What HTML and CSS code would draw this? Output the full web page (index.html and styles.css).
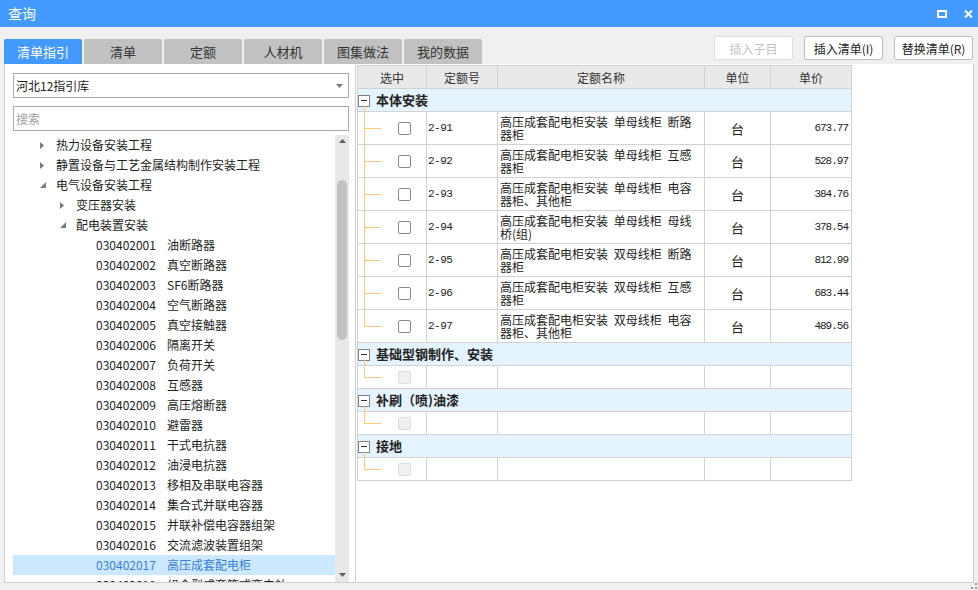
FILE: index.html
```html
<!DOCTYPE html>
<html lang="zh-CN">
<head>
<meta charset="utf-8">
<title>查询</title>
<link rel="stylesheet" href="styles.css">
</head>
<body>
<div class="titlebar">
  <span class="title">查询</span>
  <div class="win-ctrls">
    <svg class="ico-max" width="10" height="8" viewBox="0 0 10 8"><rect x="1" y="1" width="8" height="6" fill="none" stroke="#fff" stroke-width="2"/></svg>
    <svg class="ico-close" width="9" height="8" viewBox="0 0 9 8"><path d="M1 0.5L8 7.5M8 0.5L1 7.5" stroke="#fff" stroke-width="2" fill="none"/></svg>
  </div>
</div>

<div class="toolbar">
  <div class="tabs">
    <div class="tab active">清单指引</div>
    <div class="tab">清单</div>
    <div class="tab">定额</div>
    <div class="tab">人材机</div>
    <div class="tab">图集做法</div>
    <div class="tab">我的数据</div>
  </div>
  <div class="actions">
    <button class="btn disabled">插入子目</button>
    <button class="btn">插入清单(I)</button>
    <button class="btn">替换清单(R)</button>
  </div>
</div>

<div class="content">
  <div class="left">
    <div class="select">
      <span>河北12指引库</span>
      <svg width="7" height="4" viewBox="0 0 7 4"><path d="M0 0H7L3.5 4Z" fill="#7a7a7a"/></svg>
    </div>
    <div class="search">搜索</div>
    <div class="tree-wrap">
      <div class="tree">
        <div class="node l1"><span class="arr"><svg width="4" height="7" viewBox="0 0 4 7"><path d="M0 0L4 3.5L0 7Z" fill="#7a7a7a"/></svg></span>热力设备安装工程</div>
        <div class="node l1"><span class="arr"><svg width="4" height="7" viewBox="0 0 4 7"><path d="M0 0L4 3.5L0 7Z" fill="#7a7a7a"/></svg></span>静置设备与工艺金属结构制作安装工程</div>
        <div class="node l1"><span class="arr"><svg width="6" height="6" viewBox="0 0 6 6"><path d="M6 0V6H0Z" fill="#7a7a7a"/></svg></span>电气设备安装工程</div>
        <div class="node l2"><span class="arr"><svg width="4" height="7" viewBox="0 0 4 7"><path d="M0 0L4 3.5L0 7Z" fill="#7a7a7a"/></svg></span>变压器安装</div>
        <div class="node l2"><span class="arr"><svg width="6" height="6" viewBox="0 0 6 6"><path d="M6 0V6H0Z" fill="#7a7a7a"/></svg></span>配电装置安装</div>
        <div class="node l3"><span class="code">030402001</span>油断路器</div>
        <div class="node l3"><span class="code">030402002</span>真空断路器</div>
        <div class="node l3"><span class="code">030402003</span>SF6断路器</div>
        <div class="node l3"><span class="code">030402004</span>空气断路器</div>
        <div class="node l3"><span class="code">030402005</span>真空接触器</div>
        <div class="node l3"><span class="code">030402006</span>隔离开关</div>
        <div class="node l3"><span class="code">030402007</span>负荷开关</div>
        <div class="node l3"><span class="code">030402008</span>互感器</div>
        <div class="node l3"><span class="code">030402009</span>高压熔断器</div>
        <div class="node l3"><span class="code">030402010</span>避雷器</div>
        <div class="node l3"><span class="code">030402011</span>干式电抗器</div>
        <div class="node l3"><span class="code">030402012</span>油浸电抗器</div>
        <div class="node l3"><span class="code">030402013</span>移相及串联电容器</div>
        <div class="node l3"><span class="code">030402014</span>集合式并联电容器</div>
        <div class="node l3"><span class="code">030402015</span>并联补偿电容器组架</div>
        <div class="node l3"><span class="code">030402016</span>交流滤波装置组架</div>
        <div class="node l3 selected"><span class="code">030402017</span>高压成套配电柜</div>
        <div class="node l3"><span class="code">030402018</span>组合型成套箱式变电站</div>
      </div>
      <div class="scrollbar">
        <div class="sb-btn"><svg width="7" height="4" viewBox="0 0 7 4"><path d="M0 4H7L3.5 0Z" fill="#606060"/></svg></div>
        <div class="sb-thumb"></div>
        <div class="sb-fill"></div>
        <div class="sb-btn bottom"><svg width="7" height="4" viewBox="0 0 7 4"><path d="M0 0H7L3.5 4Z" fill="#606060"/></svg></div>
      </div>
    </div>
  </div>

  <div class="right">
    <table class="grid">
      <colgroup>
        <col class="c1"><col class="c2"><col class="c3"><col class="c4"><col class="c5">
      </colgroup>
      <thead>
        <tr class="hdr"><th>选中</th><th>定额号</th><th>定额名称</th><th>单位</th><th>单价</th></tr>
      </thead>
      <tbody>
        <tr class="grp"><td colspan="5"><div class="grp-in"><span class="minus"></span>本体安装</div><i class="gline"></i></td></tr>
        <tr class="row"><td class="sel"><i class="vline"></i><i class="hline"></i><span class="cb"></span></td><td class="code">2-91</td><td class="name">高压成套配电柜安装 单母线柜 断路器柜</td><td class="unit">台</td><td class="price">673.77</td></tr>
        <tr class="row"><td class="sel"><i class="vline"></i><i class="hline"></i><span class="cb"></span></td><td class="code">2-92</td><td class="name">高压成套配电柜安装 单母线柜 互感器柜</td><td class="unit">台</td><td class="price">528.97</td></tr>
        <tr class="row"><td class="sel"><i class="vline"></i><i class="hline"></i><span class="cb"></span></td><td class="code">2-93</td><td class="name">高压成套配电柜安装 单母线柜 电容器柜、其他柜</td><td class="unit">台</td><td class="price">384.76</td></tr>
        <tr class="row"><td class="sel"><i class="vline"></i><i class="hline"></i><span class="cb"></span></td><td class="code">2-94</td><td class="name">高压成套配电柜安装 单母线柜 母线桥(组)</td><td class="unit">台</td><td class="price">378.54</td></tr>
        <tr class="row"><td class="sel"><i class="vline"></i><i class="hline"></i><span class="cb"></span></td><td class="code">2-95</td><td class="name">高压成套配电柜安装 双母线柜 断路器柜</td><td class="unit">台</td><td class="price">812.99</td></tr>
        <tr class="row"><td class="sel"><i class="vline"></i><i class="hline"></i><span class="cb"></span></td><td class="code">2-96</td><td class="name">高压成套配电柜安装 双母线柜 互感器柜</td><td class="unit">台</td><td class="price">683.44</td></tr>
        <tr class="row"><td class="sel"><i class="vline last"></i><i class="hline"></i><span class="cb"></span></td><td class="code">2-97</td><td class="name">高压成套配电柜安装 双母线柜 电容器柜、其他柜</td><td class="unit">台</td><td class="price">489.56</td></tr>
        <tr class="grp"><td colspan="5"><div class="grp-in"><span class="minus"></span>基础型钢制作、安装</div><i class="gline"></i></td></tr>
        <tr class="row empty"><td class="sel"><i class="vline last"></i><i class="hline"></i><span class="cb off"></span></td><td></td><td></td><td></td><td></td></tr>
        <tr class="grp"><td colspan="5"><div class="grp-in"><span class="minus"></span>补刷（喷)油漆</div><i class="gline"></i></td></tr>
        <tr class="row empty"><td class="sel"><i class="vline last"></i><i class="hline"></i><span class="cb off"></span></td><td></td><td></td><td></td><td></td></tr>
        <tr class="grp"><td colspan="5"><div class="grp-in"><span class="minus"></span>接地</div><i class="gline"></i></td></tr>
        <tr class="row empty"><td class="sel"><i class="vline last"></i><i class="hline"></i><span class="cb off"></span></td><td></td><td></td><td></td><td></td></tr>
      </tbody>
    </table>
  </div>
</div>

<svg class="grip" width="6" height="6" viewBox="0 0 6 6"><rect x="4" y="0" width="2" height="2" fill="#9a9a9a"/><rect x="4" y="4" width="2" height="2" fill="#9a9a9a"/><rect x="0" y="4" width="2" height="2" fill="#9a9a9a"/></svg>
</body>
</html>
```

FILE: styles.css
```css
* { box-sizing: border-box; }
html, body { margin: 0; padding: 0; }
body {
  width: 978px;
  height: 590px;
  background: #f0f0f0;
  font-family: "Noto Sans CJK SC", "Noto Sans", sans-serif;
  font-size: 12px;
  color: #222;
  overflow: hidden;
  position: relative;
}

/* title bar */
.titlebar {
  height: 27px;
  background: #4499ff;
  display: flex;
  align-items: center;
  justify-content: space-between;
  padding: 0 5px 0 8px;
  color: #fff;
}
.title { font-size: 14px; line-height: 27px; }
.win-ctrls { display: flex; align-items: center; gap: 17px; }
.win-ctrls svg { display: block; }

/* toolbar */
.toolbar {
  height: 37px;
  display: flex;
  justify-content: space-between;
  align-items: flex-end;
  padding: 0 5px 0 4px;
}
.tabs { display: flex; gap: 2px; }
.tab {
  width: 78px;
  height: 25px;
  background: #c1c1c1;
  border-radius: 2px 2px 0 0;
  font-size: 13px;
  color: #333;
  display: flex;
  align-items: center;
  justify-content: center;
}
.tab.active { background: #4499ff; color: #fff; }
.actions { display: flex; gap: 11px; margin-bottom: 4px; }
.btn {
  width: 79px;
  height: 24px;
  padding: 0;
  border: 1px solid #bdbdbd;
  border-radius: 2px;
  background: #fff;
  font-family: inherit;
  font-size: 12px;
  color: #222;
  display: flex;
  align-items: center;
  justify-content: center;
}
.btn.disabled { color: #c4c4c4; border-color: #dddddd; }

/* content */
.content { display: flex; margin: 0 4px; height: 519px; }
.left {
  width: 351px;
  background: #fff;
  border-left: 1px solid #cfcfcf;
  border-bottom: 1px solid #cfcfcf;
  padding: 9px 6px 0 8px;
  display: flex;
  flex-direction: column;
  overflow: hidden;
}
.select, .search {
  height: 25px;
  border: 1px solid #a9a9a9;
  display: flex;
  align-items: center;
  padding: 0 5px 0 2px;
  flex: none;
}
.select { justify-content: space-between; }
.select svg { display: block; }
.search { margin-top: 8px; color: #a3a3a3; }

.tree-wrap { margin-top: 4px; flex: 1; min-height: 0; display: flex; }
.tree { flex: 1; overflow: hidden; }
.node {
  height: 20px;
  line-height: 20px;
  display: flex;
  align-items: center;
  white-space: nowrap;
  color: #1e1e1e;
}
.node.l1 { padding-left: 27px; }
.node.l2 { padding-left: 47px; }
.node.l3 { padding-left: 83px; }
.arr { width: 16px; display: flex; align-items: center; }
.arr svg { display: block; }
.code { width: 71px; flex: none; }
.node.selected { background: #cce8ff; color: #3a7fdc; }

.scrollbar {
  width: 14px;
  background: #e8e8e8;
  display: flex;
  flex-direction: column;
  align-items: center;
}
.sb-btn { height: 11px; display: flex; align-items: center; justify-content: center; flex: none; }
.sb-btn.bottom { height: 12px; align-items: flex-start; padding-top: 3px; }
.sb-thumb {
  margin-top: 34px;
  width: 10px;
  height: 160px;
  border-radius: 5px;
  background: #c2c2c2;
  flex: none;
}
.sb-fill { flex: 1; }

/* right grid */
.right {
  flex: 1;
  background: #fff;
  border-left: 1px solid #cfcfcf;
  border-right: 1px solid #cfcfcf;
  border-bottom: 1px solid #cfcfcf;
  padding: 1px 0 0 1px;
  overflow: hidden;
}
.grid {
  border-collapse: separate;
  border-spacing: 0;
  table-layout: fixed;
  width: 495px;
  border-top: 1px solid #d2d2d2;
  border-left: 1px solid #d2d2d2;
}
.c1 { width: 69px; }
.c2 { width: 71px; }
.c3 { width: 207px; }
.c4 { width: 66px; }
.c5 { width: 81px; }
.grid th, .grid td {
  border-right: 1px solid #d2d2d2;
  border-bottom: 1px solid #d2d2d2;
  padding: 0;
  font-weight: normal;
}
.hdr th {
  height: 23px;
  background: #e9e9e9;
  color: #333;
  font-size: 12px;
  text-align: center;
}
.grp td {
  height: 23px;
  background: #e5f3ff;
  font-weight: bold;
  font-size: 13px;
  color: #222;
  position: relative;
  white-space: nowrap;
}
.grp-in {
  height: 22px;
  display: flex;
  align-items: center;
  line-height: 16px;
}
.minus {
  flex: none;
  width: 12px;
  height: 12px;
  border: 1px solid #808080;
  background: #fff;
  margin: 1px 6px 0 0;
  position: relative;
}
.minus::after {
  content: "";
  position: absolute;
  left: 2px;
  right: 2px;
  top: 4px;
  border-top: 1px solid #333;
}
.gline {
  position: absolute;
  left: 6px;
  top: 17px;
  bottom: -1px;
  border-left: 1px solid #ffc97a;
}
.row td { height: 33px; }
.row.empty td { height: 23px; }
.sel { position: relative; }
.vline {
  position: absolute;
  left: 6px;
  top: 0;
  bottom: -1px;
  border-left: 1px solid #ffc97a;
}
.vline.last { bottom: 50%; }
.hline {
  position: absolute;
  left: 6px;
  width: 17px;
  top: 50%;
  border-top: 1px solid #ffc97a;
}
.cb {
  display: block;
  width: 13px;
  height: 13px;
  margin-left: 40px;
  border: 1px solid #8a8a8a;
  border-radius: 2px;
  background: #fff;
}
.cb.off { border-color: #dcdcdc; background: #f0f0f0; }
.grid td.code {
  padding-left: 1px;
  font-family: "Liberation Mono", monospace;
  font-size: 11px;
  letter-spacing: -0.5px;
}
.grid td.name {
  padding: 0 4px 0 2px;
  line-height: 13px;
  word-spacing: 3px;
  color: #1e1e1e;
}
.grid td.unit { text-align: center; font-size: 13px; }
.grid td.price {
  text-align: right;
  padding-right: 3px;
  font-family: "Liberation Mono", monospace;
  font-size: 11px;
  letter-spacing: -1px;
}

.grip { position: absolute; right: 1px; bottom: 1px; }
```
